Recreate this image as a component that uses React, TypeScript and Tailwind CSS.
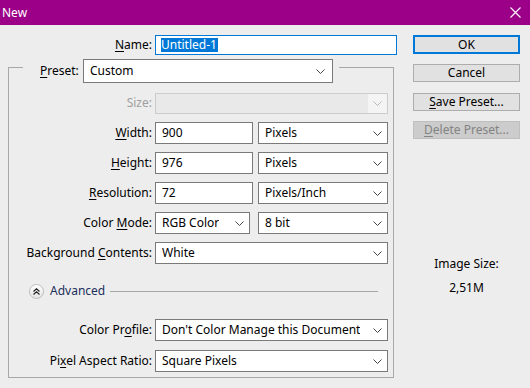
import React from 'react';

const Chevron = ({ light }: { light?: boolean }) => (
  <svg width="9" height="5" viewBox="0 0 9 5" className="shrink-0">
    <path d="M0.5 0.5 L4.5 4.5 L8.5 0.5" fill="none" stroke={light ? '#b8b8b8' : '#444'} strokeWidth="1" />
  </svg>
);

const U = ({ children }: { children: React.ReactNode }) => <span className="underline underline-offset-2">{children}</span>;

const Combo = ({ value, w }: { value: string; w: string }) => (
  <div className={`${w} h-[22px] bg-white border border-[#7a7a7a] flex items-center pl-[6px] pr-[5px] justify-between`}>
    <span className="truncate">{value}</span>
    <Chevron />
  </div>
);

const Field = ({ value, w }: { value: string; w: string }) => (
  <div className={`${w} h-[22px] bg-white border border-[#7a7a7a] flex items-center pl-[6px]`}>{value}</div>
);

const Row = ({ label, children, className = '' }: { label: React.ReactNode; children: React.ReactNode; className?: string }) => (
  <div className={`flex items-center h-[22px] ${className}`}>
    <div className="w-[146px] text-right pr-[3px] shrink-0">{label}</div>
    <div className="flex gap-[5px]">{children}</div>
  </div>
);

const Button = ({ children, primary, disabled, className = '' }: { children: React.ReactNode; primary?: boolean; disabled?: boolean; className?: string }) => (
  <div
    className={`h-[18px] flex items-center justify-center ${
      primary
        ? 'bg-[#e1e1e1] border-2 border-[#0078d7]'
        : disabled
        ? 'bg-[#cccccc] border border-[#bfbfbf] text-[#838383]'
        : 'bg-[#e1e1e1] border border-[#adadad]'
    } ${className}`}
  >
    {children}
  </div>
);

export default function App() {
  return (
    <div className="w-[530px] h-[388px] bg-[#ededed] text-black text-[12px] leading-[16px] font-['Noto_Sans',sans-serif] overflow-hidden">
      {/* title bar */}
      <div className="h-[25px] bg-[#9c0088] flex items-center justify-between pl-[2px] pr-[9px] text-white">
        <span>New</span>
        <svg width="11" height="11" viewBox="0 0 11 11">
          <path d="M0.5 0.5 L10.5 10.5 M10.5 0.5 L0.5 10.5" stroke="#fff" strokeWidth="1.1" />
        </svg>
      </div>

      <div className="flex pl-[8px] pt-[10px]">
        {/* left column */}
        <div className="w-[389px]">
          <div className="flex items-center h-[20px]">
            <div className="w-[147px] text-right pr-[3px]">
              <U>N</U>ame:
            </div>
            <div className="w-[242px] h-[20px] bg-white border border-[#0078d7] flex items-center pl-[5px]">
              <span className="bg-[#0078d7] text-white leading-[14px] pr-[1px]">Untitled-1</span>
            </div>
          </div>

          {/* group box */}
          <div className="mt-[12px] w-[386px] border border-[#a8a8a8] pb-[5px]">
            <div className="mt-[-9px] ml-[14px] w-[316px] bg-[#ededed] flex items-center h-[24px] pl-[17px]">
              <div className="w-[38px]">
                <U>P</U>reset:
              </div>
              <div className="ml-[5px] w-[250px] h-[24px] bg-white border border-[#7a7a7a] flex items-center justify-between pl-[6px] pr-[7px]">
                <span>Custom</span>
                <Chevron />
              </div>
            </div>

            <div className="flex flex-col gap-[8px] mt-[9px]">
              <Row label={<span className="text-[#a0a0a0]">Size:</span>}>
                <div className="w-[233px] h-[21px] border border-[#cccccc] bg-[#e9e9e9] flex">
                  <div className="flex-1" />
                  <div className="w-[19px] bg-[#f4f4f4] flex items-center justify-center">
                    <Chevron light />
                  </div>
                </div>
              </Row>
              <Row label={<><U>W</U>idth:</>}>
                <Field value="900" w="w-[98px]" />
                <Combo value="Pixels" w="w-[130px]" />
              </Row>
              <Row label={<><U>H</U>eight:</>}>
                <Field value="976" w="w-[98px]" />
                <Combo value="Pixels" w="w-[130px]" />
              </Row>
              <Row label={<><U>R</U>esolution:</>}>
                <Field value="72" w="w-[98px]" />
                <Combo value="Pixels/Inch" w="w-[130px]" />
              </Row>
              <Row label={<>Color <U>M</U>ode:</>}>
                <div className="flex gap-[8px]">
                  <Combo value="RGB Color" w="w-[95px]" />
                  <Combo value="8 bit" w="w-[130px]" />
                </div>
              </Row>
              <Row label={<>Background <U>C</U>ontents:</>}>
                <Combo value="White" w="w-[233px]" />
              </Row>
            </div>

            {/* advanced */}
            <div className="flex items-center h-[16px] mt-[19px] pl-[20px]">
              <div className="w-[15px] h-[15px] rounded-full border border-[#bdbdbd] bg-gradient-to-b from-white to-[#e4e4e4] flex items-center justify-center">
                <svg width="7" height="7" viewBox="0 0 7 7">
                  <path d="M0.5 3.5 L3.5 0.8 L6.5 3.5 M0.5 6.5 L3.5 3.8 L6.5 6.5" fill="none" stroke="#222" strokeWidth="1.2" />
                </svg>
              </div>
              <span className="ml-[6px] text-[#1c2f5c]">Advanced</span>
              <div className="ml-[5px] w-[268px] h-px bg-[#a8a8a8]" />
            </div>

            <div className="flex flex-col gap-[9px] mt-[20px]">
              <Row label={<>Color Pr<U>o</U>file:</>}>
                <Combo value="Don't Color Manage this Document" w="w-[233px]" />
              </Row>
              <Row label={<>Pi<U>x</U>el Aspect Ratio:</>}>
                <Combo value="Square Pixels" w="w-[233px]" />
              </Row>
            </div>
          </div>
        </div>

        {/* right column */}
        <div className="ml-[16px] w-[107px] flex flex-col">
          <Button primary className="h-[19px]">OK</Button>
          <Button className="mt-[10px]">Cancel</Button>
          <Button className="mt-[11px]">
            <span>
              <U>S</U>ave Preset...
            </span>
          </Button>
          <Button disabled className="mt-[10px]">
            <span>
              <U>D</U>elete Preset...
            </span>
          </Button>
          <div className="mt-[117px] text-center">Image Size:</div>
          <div className="mt-[8px] text-center">2,51M</div>
        </div>
      </div>
    </div>
  );
}
